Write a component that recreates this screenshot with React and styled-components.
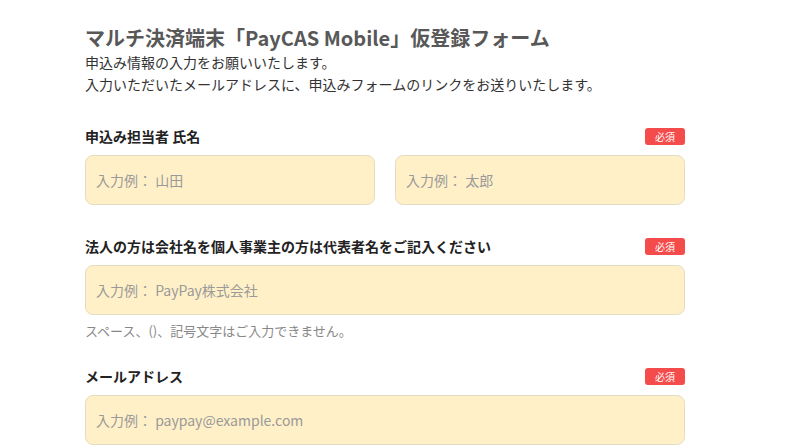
import React from 'react';
import styled, { createGlobalStyle } from 'styled-components';

const GlobalStyle = createGlobalStyle`
    body {
        margin: 0;
        background: #ffffff;
        font-family: "Noto Sans CJK JP", "Noto Sans", sans-serif;
    }
`

const Page = styled.div`
    display: flex;
    flex-direction: column;
    width: 600px;
    margin-left: 85px;
    padding-top: 24px;
`

const Title = styled.h1`
    margin: 0;
    font-size: 20px;
    line-height: 27px;
    font-weight: 700;
    color: #585858;
`

const Lead = styled.p`
    margin: 0;
    font-size: 14px;
    line-height: 22px;
    color: #333333;
`

const Field = styled.div`
    display: flex;
    flex-direction: column;
    margin-top: ${props => props.gap}px;
`

const LabelRow = styled.div`
    display: flex;
    flex-direction: row;
    align-items: center;
    justify-content: space-between;
    height: 20px;
`

const Label = styled.label`
    font-size: 14px;
    font-weight: 700;
    color: #222222;
`

const Badge = styled.span`
    display: flex;
    align-items: center;
    justify-content: center;
    width: 40px;
    height: 17px;
    border-radius: 3px;
    background: #f44b4b;
    color: #ffffff;
    font-size: 10px;
    font-weight: 400;
`

const Inputs = styled.div`
    display: flex;
    flex-direction: row;
    gap: 20px;
    margin-top: 9px;
`

const Input = styled.input`
    flex: 1;
    min-width: 0;
    box-sizing: border-box;
    height: 50px;
    padding: 0 10px;
    border: 1px solid #e4dcc2;
    border-radius: 8px;
    background: #fff0c7;
    font-family: "Noto Sans CJK JP", "Noto Sans", sans-serif;
    font-size: 14px;
    color: #333333;
    outline: none;

    &::placeholder {
        color: #9a9a9a;
    }
`

const Note = styled.p`
    margin: 6px 0 0 0;
    font-size: 13px;
    line-height: 20px;
    color: #888888;
`

const App = () => {
    return (
        <>
            <GlobalStyle />
            <Page>
                <Title>マルチ決済端末「PayCAS Mobile」仮登録フォーム</Title>
                <Lead>申込み情報の入力をお願いいたします。</Lead>
                <Lead>入力いただいたメールアドレスに、申込みフォームのリンクをお送りいたします。</Lead>

                <Field gap={31}>
                    <LabelRow>
                        <Label>申込み担当者 氏名</Label>
                        <Badge>必須</Badge>
                    </LabelRow>
                    <Inputs>
                        <Input placeholder="入力例： 山田" />
                        <Input placeholder="入力例： 太郎" />
                    </Inputs>
                </Field>

                <Field gap={31}>
                    <LabelRow>
                        <Label>法人の方は会社名を個人事業主の方は代表者名をご記入ください</Label>
                        <Badge>必須</Badge>
                    </LabelRow>
                    <Inputs>
                        <Input placeholder="入力例： PayPay株式会社" />
                    </Inputs>
                    <Note>スペース、()、記号文字はご入力できません。</Note>
                </Field>

                <Field gap={25}>
                    <LabelRow>
                        <Label>メールアドレス</Label>
                        <Badge>必須</Badge>
                    </LabelRow>
                    <Inputs>
                        <Input placeholder="入力例： paypay@example.com" />
                    </Inputs>
                </Field>
            </Page>
        </>
    );
}

export default App;
